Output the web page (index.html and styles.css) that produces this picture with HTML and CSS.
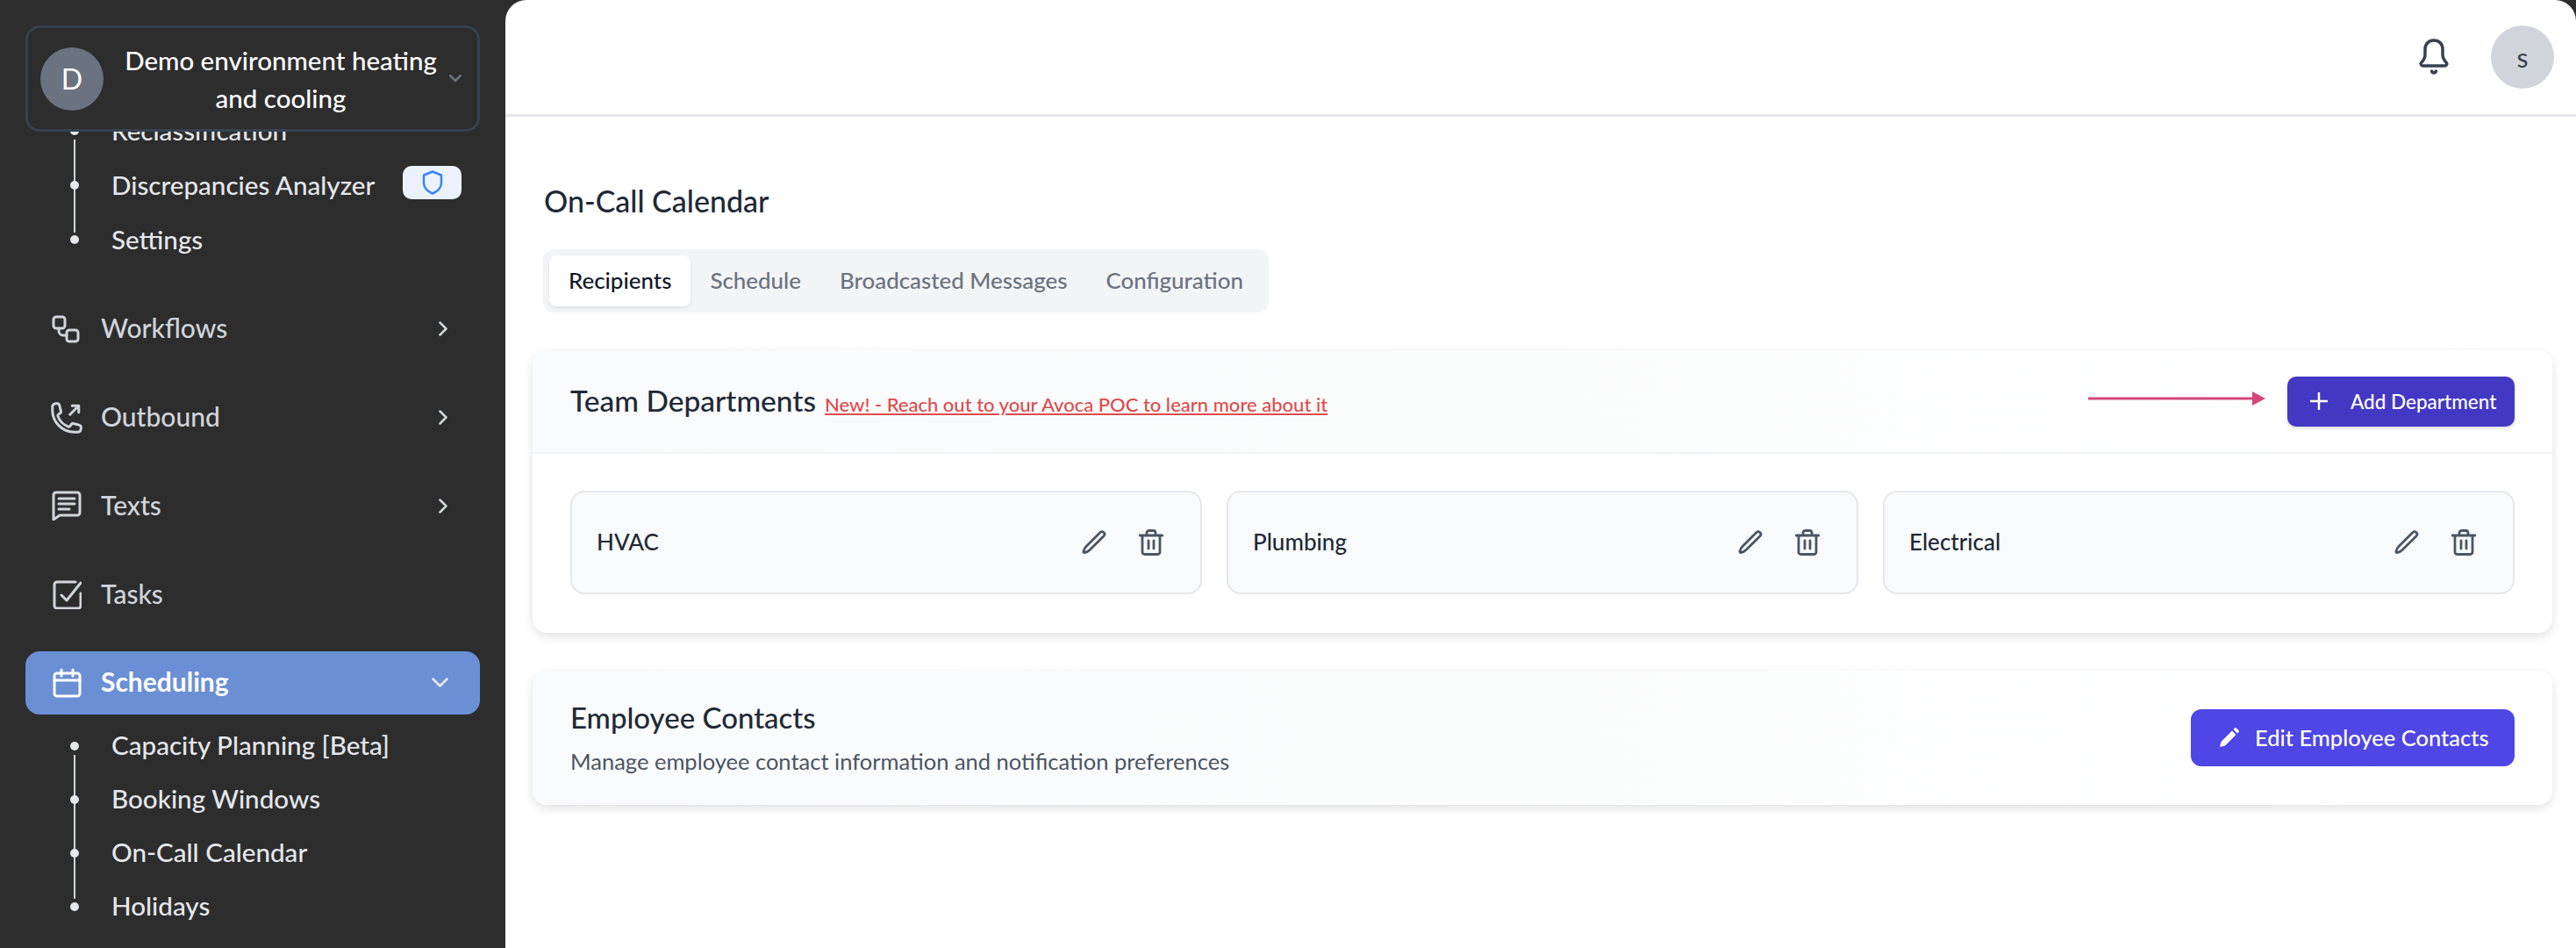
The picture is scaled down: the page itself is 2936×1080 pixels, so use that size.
FILE: index.html
```html
<!DOCTYPE html>
<html lang="en">
<head>
  <meta charset="UTF-8" />
  <title>On-Call Calendar</title>
  <link rel="stylesheet" href="styles.css">
</head>
<body>
  <div class="app">
    <aside class="sidebar">
      <div class="org-wrap">
        <div class="org">
          <div class="org-avatar">D</div>
          <div class="org-name">Demo environment heating and cooling</div>
          <svg class="org-chevron" width="14" height="9" viewBox="0 0 14 9"><path d="M1 1l6 6 6-6"/></svg>
        </div>
      </div>

      <div class="nav-scroll">
        <nav class="nav">
          <ul class="sub-list sub-list-top">
            <li>Reclassification</li>
            <li class="sub-badge-row">Discrepancies Analyzer
              <span class="badge">
                <svg width="24" height="28" viewBox="0 0 24 28"><path d="M12 1.500l10 4v9c0 5.500-4.500 9.500-10 12-5.500-2.500-10-6.500-10-12v-9z"/></svg>
              </span>
            </li>
            <li>Settings</li>
          </ul>

          <div class="nav-item">
            <svg class="nav-icon" width="32" height="32" viewBox="0 0 32 32"><rect x="2" y="2" width="13" height="13" rx="3"/><rect x="17" y="17" width="13" height="13" rx="3"/><path d="M8 15v3a5 5 0 0 0 5 5h4"/></svg>
            <span>Workflows</span>
            <svg class="nav-chevron" width="11" height="17" viewBox="0 0 11 17"><path d="M1.500 1.500l7 7-7 7"/></svg>
          </div>
          <div class="nav-item">
            <svg class="nav-icon nav-icon-phone" width="40" height="40" viewBox="0 0 24 24"><path d="M20.250 3.750v4.500m0-4.500h-4.500m4.500 0-6 6m3 12c-8.284 0-15-6.716-15-15V4.500A2.250 2.250 0 0 1 4.500 2.250h1.372c.516 0 .966.351 1.091.852l1.106 4.423c.11.44-.054.902-.417 1.173l-1.293.97a1.062 1.062 0 0 0-.38 1.210 12.035 12.035 0 0 0 7.143 7.143c.441.162.928-.004 1.210-.38l.97-1.293a1.125 1.125 0 0 1 1.173-.417l4.423 1.106c.5.125.852.575.852 1.091V19.500a2.250 2.250 0 0 1-2.250 2.250h-2.250Z"/></svg>
            <span>Outbound</span>
            <svg class="nav-chevron" width="11" height="17" viewBox="0 0 11 17"><path d="M1.500 1.500l7 7-7 7"/></svg>
          </div>
          <div class="nav-item">
            <svg class="nav-icon" width="34" height="34" viewBox="0 0 34 34"><path d="M2 5a3 3 0 0 1 3-3h24a3 3 0 0 1 3 3v20a3 3 0 0 1-3 3H9l-7 5z"/><path d="M8 9h18M8 15h18M8 21h12"/></svg>
            <span>Texts</span>
            <svg class="nav-chevron" width="11" height="17" viewBox="0 0 11 17"><path d="M1.500 1.500l7 7-7 7"/></svg>
          </div>
          <div class="nav-item">
            <svg class="nav-icon" width="34" height="34" viewBox="0 0 34 34"><path d="M27 3H6a3 3 0 0 0-3 3v24a3 3 0 0 0 3 3h24a3 3 0 0 0 3-3V16"/><path d="M11 18l6 6L33 4"/></svg>
            <span>Tasks</span>
          </div>
          <div class="nav-item nav-item-active">
            <svg class="nav-icon" width="34" height="34" viewBox="0 0 34 34"><rect x="3" y="6" width="29" height="26" rx="3"/><path d="M3 14h29M11 2v7M24 2v7"/></svg>
            <span>Scheduling</span>
            <svg class="nav-chevron" width="19" height="11" viewBox="0 0 19 11"><path d="M1.500 1.500l8 8 8-8"/></svg>
          </div>

          <ul class="sub-list sub-list-open">
            <li>Capacity Planning [Beta]</li>
            <li>Booking Windows</li>
            <li>On-Call Calendar</li>
            <li>Holidays</li>
          </ul>
        </nav>
      </div>
    </aside>

    <main class="main">
      <header class="topbar">
        <svg class="bell" width="38" height="42" viewBox="0 0 38 42"><path d="M19 2c-6.500 0-10 4.500-10 10v6c0 4-1 6-4 9-1.500 1.500-.8 4 1.500 4h25c2.300 0 3-2.500 1.500-4-3-3-4-5-4-9v-6c0-5.500-3.500-10-10-10z"/><path d="M16.500 37c1 2.500 4 2.500 5 0"/></svg>
        <div class="user-avatar">s</div>
      </header>

      <div class="content">
        <h1 class="page-title">On-Call Calendar</h1>

        <div class="tabs">
          <div class="tab tab-active">Recipients</div>
          <div class="tab">Schedule</div>
          <div class="tab">Broadcasted Messages</div>
          <div class="tab">Configuration</div>
        </div>

        <section class="card">
          <div class="card-head">
            <div class="card-title-row">
              <h2 class="card-title">Team Departments</h2>
              <a class="new-link" href="#">New! - Reach out to your Avoca POC to learn more about it</a>
            </div>
            <div class="card-actions">
              <svg class="arrow" width="202" height="16" viewBox="0 0 202 16"><path d="M0 6.500h188v3H0z"/><path d="M187 0l15 8-15 8z"/></svg>
              <button class="btn btn-add">
                <svg width="22" height="22" viewBox="0 0 22 22"><path d="M11 1v20M1 11h20"/></svg>
                Add Department
              </button>
            </div>
          </div>
          <div class="dept-grid">
            <div class="dept">
              <span>HVAC</span>
              <div class="dept-icons">
                <svg width="28" height="28" viewBox="0 0 28 28"><path d="M21 2.500c1.500-1.200 3.300-.8 4.200.2 1 1.100 1 2.800-.2 4L9 22.500c-1.500 1.500-3.800 2.800-5.800 3-1 .1-1.400-.5-1.200-1.400.4-2 1.600-4.200 3-5.600z"/></svg>
                <svg width="28" height="30" viewBox="0 0 28 30"><path d="M1 7h26M9 7V4a2.500 2.500 0 0 1 2.500-2.500h5A2.500 2.500 0 0 1 19 4v3M4 7v19a2.500 2.500 0 0 0 2.500 2.500h15A2.500 2.500 0 0 0 24 26V7M11 13v9M17 13v9"/></svg>
              </div>
            </div>
            <div class="dept">
              <span>Plumbing</span>
              <div class="dept-icons">
                <svg width="28" height="28" viewBox="0 0 28 28"><path d="M21 2.500c1.500-1.200 3.300-.8 4.200.2 1 1.100 1 2.800-.2 4L9 22.500c-1.500 1.500-3.800 2.800-5.800 3-1 .1-1.400-.5-1.200-1.400.4-2 1.600-4.200 3-5.600z"/></svg>
                <svg width="28" height="30" viewBox="0 0 28 30"><path d="M1 7h26M9 7V4a2.500 2.500 0 0 1 2.500-2.500h5A2.500 2.500 0 0 1 19 4v3M4 7v19a2.500 2.500 0 0 0 2.500 2.500h15A2.500 2.500 0 0 0 24 26V7M11 13v9M17 13v9"/></svg>
              </div>
            </div>
            <div class="dept">
              <span>Electrical</span>
              <div class="dept-icons">
                <svg width="28" height="28" viewBox="0 0 28 28"><path d="M21 2.500c1.500-1.200 3.300-.8 4.200.2 1 1.100 1 2.800-.2 4L9 22.500c-1.500 1.500-3.800 2.800-5.800 3-1 .1-1.400-.5-1.200-1.400.4-2 1.600-4.200 3-5.600z"/></svg>
                <svg width="28" height="30" viewBox="0 0 28 30"><path d="M1 7h26M9 7V4a2.500 2.500 0 0 1 2.500-2.500h5A2.500 2.500 0 0 1 19 4v3M4 7v19a2.500 2.500 0 0 0 2.500 2.500h15A2.500 2.500 0 0 0 24 26V7M11 13v9M17 13v9"/></svg>
              </div>
            </div>
          </div>
        </section>

        <section class="card card-contacts">
          <div class="contacts-text">
            <h2 class="card-title">Employee Contacts</h2>
            <p class="card-desc">Manage employee contact information and notification preferences</p>
          </div>
          <button class="btn btn-edit">
            <svg width="22" height="22" viewBox="0 0 22 22"><path d="M0 22l1.500-6L14 3.500l4.500 4.500L6 20.500zM15.500 2l1.500-1.500a1.500 1.500 0 0 1 2 0l2.500 2.500a1.500 1.500 0 0 1 0 2L20 6.500z"/></svg>
            Edit Employee Contacts
          </button>
        </section>
      </div>
    </main>
  </div>
</body>
</html>
```
FILE: styles.css
```css
html, body {
  margin: 0;
  padding: 0;
  height: 100%;
  overflow: hidden;
}

body {
  font-family: 'Lato', 'Noto Sans', sans-serif;
  background-color: #2d2d2d;
  color: #1f2937;
}

h1, h2, p, ul {
  margin: 0;
  padding: 0;
}

.app {
  display: flex;
  height: 1080px;
}

/* Sidebar */
.sidebar {
  width: 576px;
  flex-shrink: 0;
  display: flex;
  flex-direction: column;
  background-color: #2d2d2d;
}

.org-wrap {
  height: 150px;
  padding: 29px 29px 0;
  box-sizing: border-box;
  flex-shrink: 0;
}

.org {
  height: 121px;
  box-sizing: border-box;
  display: flex;
  align-items: center;
  padding: 0 18px 0 14px;
  border: 3px solid #374151;
  border-radius: 16px;
}

.org-avatar {
  width: 72px;
  height: 72px;
  flex-shrink: 0;
  border-radius: 50%;
  background-color: #6b7280;
  color: #fff;
  font-size: 32px;
  display: flex;
  align-items: center;
  justify-content: center;
}

.org-name {
  flex: 1;
  color: #fff;
  font-size: 29.500px;
  font-weight: 500;
  line-height: 43px;
  text-align: center;
  padding: 0 6px 0 16px;
}

.org-chevron path,
.nav-chevron path {
  fill: none;
  stroke-width: 2.5;
  stroke-linecap: round;
  stroke-linejoin: round;
}

.org-chevron path {
  stroke: #6b7280;
}

.nav-scroll {
  flex: 1;
  overflow: hidden;
}

.nav {
  margin-top: -31px;
  padding: 0 29px;
  display: flex;
  flex-direction: column;
  gap: 28.75px;
}

.nav-item {
  height: 72px;
  flex-shrink: 0;
  display: flex;
  align-items: center;
  padding: 0 36px 0 31px;
  border-radius: 16px;
  color: #d1d5db;
  font-size: 30px;
  font-weight: 500;
  position: relative;
}

.nav-item span {
  margin-left: 55px;
  padding-bottom: 3px;
}

.nav-icon {
  position: absolute;
  left: 30px;
  top: 50%;
  transform: translateY(-50%);
  fill: none;
  stroke: #d1d5db;
  stroke-width: 3;
  stroke-linecap: round;
  stroke-linejoin: round;
}

.nav-icon-phone {
  left: 27px;
  stroke-width: 1.800;
}

.nav-chevron {
  margin-left: auto;
}

.nav-chevron path {
  stroke: #d1d5db;
}

.nav-item-active {
  background-color: #6b8fd4;
  color: #fff;
  font-weight: 700;
}

.nav-item-active .nav-icon {
  stroke: #fff;
}

.nav-item-active .nav-chevron path {
  stroke: #e5e7eb;
}

.sub-list {
  list-style: none;
  position: relative;
  margin-bottom: 5px;
}

.sub-list-open {
  margin-top: -23px;
}

.sub-list::before {
  content: "";
  position: absolute;
  left: 55px;
  top: 40px;
  bottom: 40px;
  width: 2px;
  background-color: #d1d5db;
}

.sub-list li {
  height: 61px;
  box-sizing: border-box;
  padding-bottom: 3px;
  display: flex;
  align-items: center;
  padding-left: 98px;
  color: #e5e7eb;
  font-size: 29.600px;
  font-weight: 500;
  position: relative;
}

.sub-list-top li {
  height: 62px;
}

.sub-list li::before {
  content: "";
  position: absolute;
  left: 51px;
  top: 25px;
  width: 10px;
  height: 10px;
  border-radius: 50%;
  background-color: #e5e7eb;
}

.badge {
  position: absolute;
  left: 430px;
  top: 8px;
  width: 67px;
  height: 38px;
  border-radius: 10px;
  background-color: #ebf2fe;
  display: flex;
  align-items: center;
  justify-content: center;
}

.badge path {
  fill: none;
  stroke: #3b82f6;
  stroke-width: 2.500;
  stroke-linejoin: round;
}

/* Main */
.main {
  flex: 1;
  background-color: #fff;
  border-radius: 24px 24px 0 0;
  overflow: hidden;
}

.topbar {
  height: 133px;
  box-sizing: border-box;
  border-bottom: 3px solid #e5e7eb;
  display: flex;
  align-items: center;
  justify-content: flex-end;
  padding-right: 25px;
  gap: 46px;
}

.bell {
  fill: none;
  stroke: #374151;
  stroke-width: 3.500;
  stroke-linecap: round;
  stroke-linejoin: round;
}

.user-avatar {
  width: 72px;
  height: 72px;
  border-radius: 50%;
  background-color: #d1d5db;
  color: #374151;
  font-size: 30px;
  display: flex;
  align-items: center;
  justify-content: center;
}

.content {
  padding: 69px 27px 0 31px;
}

.page-title {
  margin-left: 13px;
  font-size: 34px;
  font-weight: 500;
  line-height: 54px;
  color: #1f2937;
}

.tabs {
  display: inline-flex;
  margin: 28px 0 43px 12px;
  padding: 7px;
  border-radius: 12px;
  background-color: #f3f4f6;
  vertical-align: top;
}

.tab {
  padding: 0 22px 3px;
  height: 58px;
  box-sizing: border-box;
  display: flex;
  align-items: center;
  font-size: 25.900px;
  font-weight: 500;
  color: #6b7280;
}

.tab-active {
  background-color: #fff;
  border-radius: 8px;
  color: #111827;
  box-shadow: 0 2px 4px rgba(0, 0, 0, 0.08);
}

.card {
  display: block;
  background-color: #fff;
  border-radius: 16px;
  box-shadow: 0 4px 12px rgba(0, 0, 0, 0.12);
  overflow: hidden;
  margin-bottom: 43px;
}

.card-head {
  height: 118px;
  box-sizing: border-box;
  display: flex;
  align-items: center;
  justify-content: space-between;
  padding: 0 43px;
  border-bottom: 2px solid #f3f4f6;
  background: linear-gradient(90deg, #f9fafb, #fff);
}

.card-title-row {
  display: flex;
  align-items: baseline;
  gap: 10px;
  padding-bottom: 2px;
}

.card-title {
  font-size: 33.500px;
  font-weight: 500;
  color: #1f2937;
}

.card-contacts .card-title {
  font-size: 33px;
}

.new-link {
  font-size: 22px;
  font-weight: 500;
  color: #dc4c4c;
}

.card-actions {
  display: flex;
  align-items: center;
  gap: 25px;
}

.arrow {
  fill: #d1477a;
  margin-top: -6px;
}

.btn {
  border: none;
  color: #fff;
  font-family: inherit;
  display: flex;
  align-items: center;
  white-space: nowrap;
}

.btn-add {
  height: 57px;
  width: 259px;
  padding: 0 0 0 25px;
  border-radius: 10px;
  background-color: #4338c4;
  font-size: 22.500px;
  font-weight: 500;
  gap: 25px;
  box-shadow: 0 2px 4px rgba(0, 0, 0, 0.15);
}

.btn-add path {
  stroke: #fff;
  stroke-width: 2.500;
}

.dept-grid {
  display: grid;
  grid-template-columns: repeat(3, 1fr);
  gap: 28px;
  padding: 42px 43px 44px;
}

.dept {
  height: 118px;
  box-sizing: border-box;
  display: flex;
  align-items: center;
  justify-content: space-between;
  padding: 0 42px 0 28px;
  border: 2px solid #e5e7eb;
  border-radius: 16px;
  background-color: #f9fafb;
  font-size: 26px;
  font-weight: 500;
  color: #1f2937;
}

.dept span {
  padding-bottom: 3px;
}

.dept-icons {
  display: flex;
  align-items: center;
  gap: 37px;
}

.dept-icons svg {
  fill: none;
  stroke: #4b5563;
  stroke-width: 2.800;
  stroke-linecap: round;
  stroke-linejoin: round;
}

.card-contacts {
  height: 153px;
  box-sizing: border-box;
  display: flex;
  align-items: center;
  justify-content: space-between;
  padding: 0 43px;
  background: linear-gradient(90deg, #f9fafb, #fff);
}

.contacts-text {
  padding-bottom: 2px;
}

.card-desc {
  margin-top: 15px;
  font-size: 25.500px;
  color: #4b5563;
}

.btn-edit {
  height: 65px;
  width: 369px;
  padding: 0 0 2px 33px;
  border-radius: 12px;
  background-color: #4f46e5;
  font-size: 25.500px;
  font-weight: 500;
  gap: 18px;
}

.btn-edit path {
  fill: #fff;
}
```
